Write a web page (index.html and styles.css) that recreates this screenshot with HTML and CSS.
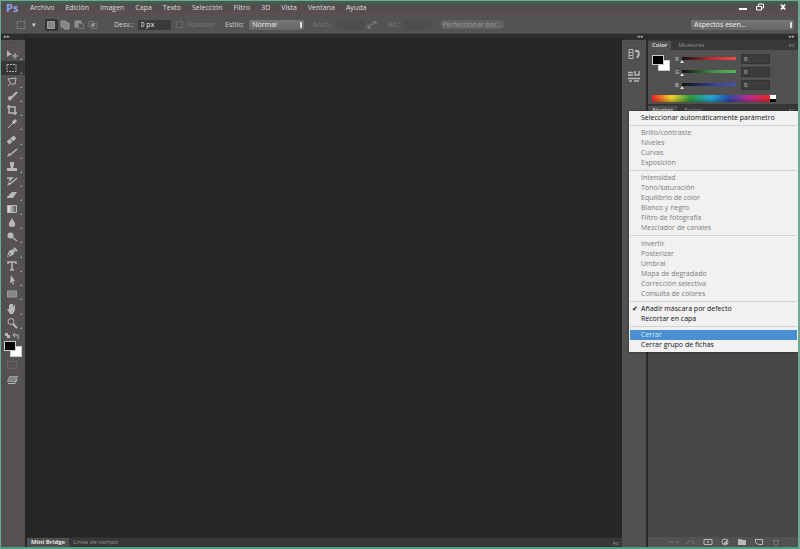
FILE: index.html
```html
<!DOCTYPE html>
<html lang="es">
<head>
<meta charset="utf-8">
<title>Ps</title>
<link rel="stylesheet" href="styles.css">
</head>
<body>
<header class="titlebar">
  <span class="logo">Ps</span>
  <nav class="menubar">
    <a href="#">Archivo</a><a href="#">Edición</a><a href="#">Imagen</a><a href="#">Capa</a><a href="#">Texto</a><a href="#">Selección</a><a href="#">Filtro</a><a href="#">3D</a><a href="#">Vista</a><a href="#">Ventana</a><a href="#">Ayuda</a>
  </nav>
  <div class="window-buttons">
    <button aria-label="Minimizar"><svg viewBox="0 0 10 8"><path d="M1 6h8" stroke-width="2"/></svg></button>
    <button aria-label="Restaurar"><svg viewBox="0 0 10 8"><path d="M3.500 3V1h5v4H7M1.500 3.500h5v3.500h-5z"/></svg></button>
    <button class="close" aria-label="Cerrar"><svg viewBox="0 0 10 8"><path d="M3 1.500l4 5M7 1.500l-4 5" stroke-width="1.600"/></svg></button>
  </div>
</header>

<section class="options">
  <button class="opt-tool" aria-label="Marco rectangular"><svg viewBox="0 0 12 10"><path d="M2 1.500h8v7H2z" stroke-dasharray="2 1"/></svg></button>
  <span class="caret">▾</span>
  <div class="modes">
    <button class="on" aria-label="Selección nueva"><svg viewBox="0 0 12 10"><path class="gray" d="M2.500 1.500h7v7h-7z"/></svg></button>
    <button aria-label="Añadir a selección"><svg viewBox="0 0 12 10"><path class="gray" d="M2 1h5v2h3v6H5V7H2z"/></svg></button>
    <button aria-label="Restar de selección"><svg viewBox="0 0 12 10"><path class="gray" d="M2 1h6v2H5v4H2z"/><path class="dim" d="M5.500 3.500h5v5h-5z"/></svg></button>
    <button aria-label="Formar intersección"><svg viewBox="0 0 12 10"><path class="dim" d="M2 1.500h5v5H2zM5 3.500h5v5H5z"/><path class="gray" d="M5 4h2v2H5z"/></svg></button>
  </div>
  <label class="feather">Desv.: <input type="text" value="0 px"></label>
  <label class="off alias"><input type="checkbox" disabled> Suavizar</label>
  <label class="style">Estilo: <select><option>Normal</option></select></label>
  <label class="off dims">Anch.: <input type="text" disabled></label>
  <svg class="swap off" viewBox="0 0 12 10"><path d="M2 7l7-5M7 2h3v2M2 5v3h3"/></svg>
  <label class="off dims">Alt.: <input type="text" disabled></label>
  <button class="refine">Perfeccionar bor...</button>
  <select class="workspace" aria-label="Espacio de trabajo"><option>Aspectos esen...</option></select>
</section>

<main class="workarea">
  <aside class="toolbox">
    <div class="strip">▸▸</div>
    <div class="grip"></div>
    <div class="tools">
      <button aria-label="Mover"><svg viewBox="0 0 12 12"><path class="fill" d="M1 2l5 5H3.500L1 9z"/><path d="M9 5v6M6 8h6"/></svg></button>
      <button class="on" aria-label="Marco"><svg viewBox="0 0 12 12"><path d="M1 2.500h9v7H1z" stroke-dasharray="2 1"/></svg></button>
      <button aria-label="Lazo"><svg viewBox="0 0 12 12"><path d="M2 3l8-1-1 6H5L2 3zM4 8l-2 2"/></svg></button>
      <button aria-label="Selección rápida"><svg viewBox="0 0 12 12"><path d="M5 8l6-6" stroke-width="2"/><path class="fill" d="M2 7l3-1 1 3-3 2z"/></svg></button>
      <button aria-label="Recortar"><svg viewBox="0 0 12 12"><path d="M3 1v8h8M1 3h8v8" stroke-width="1.500"/></svg></button>
      <button aria-label="Cuentagotas"><svg viewBox="0 0 12 12"><path d="M2 10l5-5M6 3l3 3"/><path d="M7 5l3-3" stroke-width="3"/></svg></button>
      <button class="spaced" aria-label="Pincel corrector"><svg viewBox="0 0 12 12"><path d="M2 10l7-6" stroke-width="4"/><path class="cut" d="M4 6l3 3"/></svg></button>
      <button aria-label="Pincel"><svg viewBox="0 0 12 12"><path d="M4 8l7-6" stroke-width="1.500"/><path class="fill" d="M1 10l2-4 2 2z"/></svg></button>
      <button aria-label="Tampón"><svg viewBox="0 0 12 12"><path class="fill" d="M4 1h4v3L7 7h4v3H1V7h4L4 4z"/></svg></button>
      <button aria-label="Pincel de historia"><svg viewBox="0 0 12 12"><path d="M4 9l7-6M1 3h5L3 6" stroke-width="1.500"/><path class="fill" d="M1 11l2-4 2 2z"/></svg></button>
      <button aria-label="Borrador"><svg viewBox="0 0 12 12"><path class="fill" d="M1 8l5-5h5L7 9H1z"/></svg></button>
      <button aria-label="Degradado"><svg viewBox="0 0 12 12"><defs><linearGradient id="fade"><stop stop-color="#eee"/><stop offset="1" stop-color="#555"/></linearGradient></defs><path fill="url(#fade)" d="M1.500 2.500h9v7h-9z"/></svg></button>
      <button aria-label="Desenfocar"><svg viewBox="0 0 12 12"><path class="fill" d="M6 1l3 5q1 4-3 4T3 6z"/></svg></button>
      <button aria-label="Sobreexponer"><svg viewBox="0 0 12 12"><circle class="fill" cx="4.500" cy="4.500" r="3"/><path d="M6 6l5 4" stroke-width="1.500"/></svg></button>
      <button class="spaced" aria-label="Pluma"><svg viewBox="0 0 12 12"><path class="fill" d="M1 11l2-6 4-2 2 2-2 4z"/><path d="M8 2l3 3" stroke-width="2"/><path class="cut" d="M2 10l3-3"/></svg></button>
      <button aria-label="Texto"><svg viewBox="0 0 12 12"><path d="M2 4V2h8v2M6 2v8M4 10h4" stroke-width="1.500"/></svg></button>
      <button aria-label="Selección de trazado"><svg viewBox="0 0 12 12"><path class="fill" d="M5 1l4 6H7l1 3-1 1-1-3-2 1z"/></svg></button>
      <button aria-label="Rectángulo"><svg viewBox="0 0 12 12"><path class="gray" d="M1.500 3h9v6h-9z"/></svg></button>
      <button class="spaced" aria-label="Mano"><svg viewBox="0 0 12 12"><path class="fill" d="M3 6V2h1v3V1h1.500v4V1H7v4l1-3h1v5l-2 4H4L1 6z"/></svg></button>
      <button aria-label="Zoom"><svg viewBox="0 0 12 12"><circle cx="5" cy="4.500" r="3"/><path d="M7 7l4 4" stroke-width="2"/></svg></button>
    </div>
    <svg class="mini" viewBox="0 0 18 8"><path class="fill" d="M2 1h3v2h2v3H4V4H2z"/><path d="M11 3h4v4M12 1l-2 2 2 2"/></svg>
    <div class="swatches"><i class="fg"></i><i class="bg"></i></div>
    <button class="mask" aria-label="Máscara rápida"><svg viewBox="0 0 12 12"><path class="dim" d="M1.500 2.500h9v7h-9z" stroke-dasharray="1 1"/></svg></button>
    <button class="screen" aria-label="Modo de pantalla"><svg viewBox="0 0 12 12"><path class="gray" d="M3.500 2.500h8l-2 5h-8z"/><path d="M2 9.500h7l2-4"/></svg></button>
  </aside>

  <section class="document">
    <div class="canvas"></div>
    <footer class="bridge"><a class="on" href="#">Mini Bridge</a><a href="#">Línea de tiempo</a><span>▾≡</span></footer>
  </section>

  <aside class="dock">
    <div class="strip">◂◂</div>
    <div class="grip"></div>
    <button aria-label="Historia"><svg viewBox="0 0 14 12"><path d="M2 1.500h4v3H2zM2 4.500h4v3H2zM2 7.500h4v3H2z"/><path d="M8 3h3q2 3-1 7" stroke-width="2"/></svg></button>
    <button aria-label="Propiedades"><svg viewBox="0 0 14 12"><path d="M1 2.500h5M8 1v4h4V1M1 5h5M1 8.500h12M2 11h3M7 11h5" stroke-width="1.500"/></svg></button>
  </aside>

  <aside class="panels">
    <div class="strip">▸▸</div>
    <nav class="tabs"><a class="on" href="#">Color</a><a href="#">Muestras</a><span>▾≡</span></nav>
    <div class="color">
      <div class="swatches"><i class="fg"></i><i class="bg"></i></div>
      <div class="channels">
        <label>R <span class="ramp red"></span><input type="text" value="0"></label>
        <label>G <span class="ramp green"></span><input type="text" value="0"></label>
        <label>B <span class="ramp blue"></span><input type="text" value="0"></label>
      </div>
    </div>
    <div class="spectrum"><i></i></div>
    <div class="adjust">
      <nav class="tabs"><a class="on" href="#">Ajustes</a><a href="#">Estilos</a><span>▾≡</span></nav>
      <ul class="popup">
        <li>Seleccionar automáticamente parámetro</li>
        <li class="sep"></li>
        <li class="off">Brillo/contraste</li>
        <li class="off">Niveles</li>
        <li class="off">Curvas</li>
        <li class="off">Exposición</li>
        <li class="sep"></li>
        <li class="off">Intensidad</li>
        <li class="off">Tono/saturación</li>
        <li class="off">Equilibrio de color</li>
        <li class="off">Blanco y negro</li>
        <li class="off">Filtro de fotografía</li>
        <li class="off">Mezclador de canales</li>
        <li class="sep wide"></li>
        <li class="off">Invertir</li>
        <li class="off">Posterizar</li>
        <li class="off">Umbral</li>
        <li class="off">Mapa de degradado</li>
        <li class="off">Corrección selectiva</li>
        <li class="off">Consulta de colores</li>
        <li class="sep"></li>
        <li class="checked">Añadir máscara por defecto</li>
        <li>Recortar en capa</li>
        <li class="sep wide"></li>
        <li class="hover">Cerrar</li>
        <li>Cerrar grupo de fichas</li>
      </ul>
    </div>
    <footer class="layer-actions">
      <svg viewBox="0 0 12 8"><path class="dim" d="M1 4h4M7 4h4"/></svg>
      <svg viewBox="0 0 12 8"><path class="dim" d="M2 6l3-4M8 2v4"/></svg>
      <svg viewBox="0 0 12 8"><path d="M2 1.500h8v5H2z"/><circle class="fill" cx="6" cy="4" r="1"/></svg>
      <svg viewBox="0 0 12 8"><circle cx="6" cy="4" r="3"/><path class="fill" d="M4 6l4-4v4z"/></svg>
      <svg viewBox="0 0 12 8"><path class="fill" d="M2 1h3l1 1h4v5H2z"/></svg>
      <svg viewBox="0 0 12 8"><path d="M2.500 1.500h7v5h-4l-3-2z"/></svg>
      <svg viewBox="0 0 12 8"><path class="dim" d="M3 2.500h6M4 3v4h4V3"/></svg>
    </footer>
  </aside>
</main>
</body>
</html>
```
FILE: styles.css
```css
* { box-sizing: border-box; }
body {
  margin: 0;
  height: 100vh;
  display: flex;
  flex-direction: column;
  border: 1px solid #70a894;
  border-right-width: 2px;
  border-bottom-color: #4aa084;
  border-bottom-width: 2px;
  background: #535353;
  color: #d0d0d0;
  font: 7px/10px "Open Sans", "Noto Sans", sans-serif;
  overflow: hidden;
}
button, input, select {
  font: inherit;
  color: inherit;
  margin: 0;
  padding: 0;
  border: 0;
  background: none;
}
a { color: inherit; text-decoration: none; }
svg { display: block; fill: none; stroke: #b8b8b8; }
.fill { fill: #b8b8b8; stroke: none; }
.gray { fill: #858585; stroke: #9c9c9c; }
.dim { stroke: #777; }
.cut { stroke: #535353; }

.titlebar {
  display: flex;
  flex: none;
  height: 16px;
  padding-left: 5px;
  background: linear-gradient(#41604f, #554c4d 6px, #5b4d50 12px, #515352);
}
.logo { width: 24px; font: bold 11px/14px "Open Sans", sans-serif; color: #8da5e6; }
.menubar { display: flex; gap: 11px; line-height: 14px; color: #dedede; }
.window-buttons { display: flex; gap: 7px; margin-left: auto; padding: 0 10px 5px 0; }
.window-buttons svg { width: 10px; height: 8px; stroke: #fff; }
.window-buttons .close { margin-left: 6px; }

.options {
  display: flex;
  flex: none;
  align-items: center;
  height: 17px;
  padding: 0 4px 1px 14px;
  border-bottom: 1px solid #444;
}
.options svg { width: 12px; height: 10px; }
.opt-tool svg { stroke: #888; }
.caret { width: 18px; padding-left: 5px; }
.modes { display: flex; gap: 1px; width: 69px; }
.modes button { width: 13px; height: 12px; }
.modes .on { background: #333; border-radius: 2px; }
.options label { display: flex; align-items: center; gap: 4px; }
.options input[type=text] { width: 33px; height: 10px; padding-left: 3px; background: #3a3a3a; color: #eee; }
.options .feather { width: 62px; gap: 4px; }
.options .off { color: #777; stroke: #888; }
.options .alias { width: 49px; }
.options input[type=checkbox] { appearance: none; width: 7px; height: 7px; border: 1px solid #666; }
.options select {
  appearance: none;
  height: 10px;
  padding-left: 3px;
  color: #eee;
  background: linear-gradient(90deg, transparent 50%, #ddd 50%) right 2px center / 3px 6px no-repeat, linear-gradient(#777, #666);
  border-radius: 2px;
}
.options .style { width: 88px; gap: 5px; }
.style select { width: 55px; }
.options .dims { width: 53px; }
.options .dims input { width: 27px; background: #4e4e4e; }
.swap { margin-right: 10px; }
.options .refine { flex: none; width: 63px; height: 9px; background: #626262; color: #999; border-radius: 4px; line-height: 9px; }
.options .workspace { width: 103px; margin-left: auto; }

.workarea { flex: 1; min-height: 0; display: flex; background: #262626; }
.strip { flex: none; height: 6px; background: #2e2e2e; color: #bbb; font-size: 5px; line-height: 5px; padding: 0 3px; }
.grip { flex: none; width: 16px; height: 2px; margin: 2px auto; border-top: 1px dotted #444; }
.toolbox { width: 24px; flex: none; display: flex; flex-direction: column; background: linear-gradient(90deg, #534f50, #575253 70%, #515151); }
.tools { display: flex; flex-direction: column; padding-top: 1px; }
.tools button { position: relative; height: 14px; padding-left: 5px; }
.tools button::after { content: ""; position: absolute; right: 3px; bottom: 1px; border: 1px solid; border-color: transparent #aaa #aaa transparent; }
.tools .on { background: #363636; }
.tools .spaced { margin-top: 1px; }
.tools svg, .mask svg, .screen svg { width: 12px; height: 12px; }
.mini { flex: none; width: 18px; height: 8px; margin: 2px 2px 1px; }
.swatches { position: relative; width: 18px; height: 17px; }
.swatches i { position: absolute; border: 1px solid #ccc; }
.fg { left: 0; top: 0; width: 12px; height: 10px; background: #000; z-index: 1; }
.bg { right: 0; bottom: 1px; width: 12px; height: 11px; background: #fff; }
.toolbox .swatches { margin-left: 3px; }
.mask { height: 14px; padding-left: 5px; }
.screen { height: 16px; padding-left: 5px; }

.document { flex: 1; min-width: 0; display: flex; flex-direction: column; padding: 0 0 0 2px; }
.canvas { flex: 1; border-top: 4px solid #2e2e2e; }
.bridge, .tabs { display: flex; align-items: center; height: 10px; background: #383838; color: #929292; font-size: 6px; }
.bridge { border-top: 1px solid #2e2e2e; }
.bridge a, .tabs a { padding: 0 4px; line-height: 9px; }
.bridge .on, .tabs .on { background: #505050; color: #e2e2e2; font-weight: bold; }
.bridge span, .tabs span { margin-left: auto; padding-right: 3px; font-size: 5px; }

.dock { width: 24px; flex: none; display: flex; flex-direction: column; align-items: center; background: #515151; }
.dock .strip, .panels .strip { width: 100%; text-align: right; }
.dock button { height: 22px; padding-bottom: 7px; }
.dock svg { width: 14px; height: 12px; }

.panels { width: 152px; flex: none; display: flex; flex-direction: column; border-left: 2px solid #2b2b2b; background: #474747; }
.tabs { flex: none; }
.tabs a { margin-right: 3px; }
.tabs .on { font-weight: 600; }
.color { display: flex; flex: none; height: 43px; padding: 2px 28px 0 4px; gap: 5px; background: #515151; }
.color .swatches { margin-top: 3px; flex: none; }
.channels { flex: 1; }
.channels label { display: flex; align-items: center; height: 13px; gap: 3px; font-size: 6px; }
.ramp { position: relative; flex: 1; height: 3px; margin-right: 2px; }
.ramp::after { content: ""; position: absolute; left: -2px; top: 3px; border: 2px solid transparent; border-bottom: 3px solid #ddd; border-top: 0; }
.red { background: linear-gradient(90deg, #111, #c82f35 60%, #ef4b4f); }
.green { background: linear-gradient(90deg, #111, #439349 60%, #57b65e); }
.blue { background: linear-gradient(90deg, #111, #35419c 60%, #4657b8); }
.channels input { width: 29px; height: 10px; padding-left: 2px; background: #3c3c3c; border: 1px solid #333; color: #ddd; }
.spectrum {
  flex: none;
  position: relative;
  height: 11px;
  border: solid #515151;
  border-width: 2px 23px 2px 4px;
  background: linear-gradient(transparent 40%, #0004), linear-gradient(90deg, #e22, #f0d428 16%, #2c9a3c 31%, #22a8d8 48%, #3048a8 63%, #c02c8c 79%, #e02830 94%);
}
.spectrum i { position: absolute; right: -1px; top: 0; width: 6px; height: 7px; background: linear-gradient(#fff 50%, #000 50%); }
.adjust { flex: 1; position: relative; border-top: 1px solid #333; }
.popup {
  position: absolute;
  right: 0;
  top: 6px;
  width: 169px;
  margin: 0;
  padding: 2px 1px;
  list-style: none;
  background: #f1f1f1;
  color: #111;
  font-weight: 500;
  box-shadow: 0 0 2px #222;
  white-space: nowrap;
}
.popup li { height: 10px; padding-left: 11px; }
.popup .off { color: #7c7c7c; }
.popup .sep { height: 1px; margin: 2px 0; padding: 0; background: #d2d2d2; }
.popup .wide { margin-bottom: 3px; }
.popup .hover { background: #4a8fd2; color: #d8ecff; }
.popup .checked { position: relative; }
.popup .checked::before { content: "✔"; position: absolute; left: 2px; font-family: "DejaVu Sans", sans-serif; }
.layer-actions { display: flex; flex: none; height: 10px; padding: 1px 16px 0; justify-content: flex-end; gap: 5px; background: #525252; }
.layer-actions svg { width: 12px; height: 8px; }
```
